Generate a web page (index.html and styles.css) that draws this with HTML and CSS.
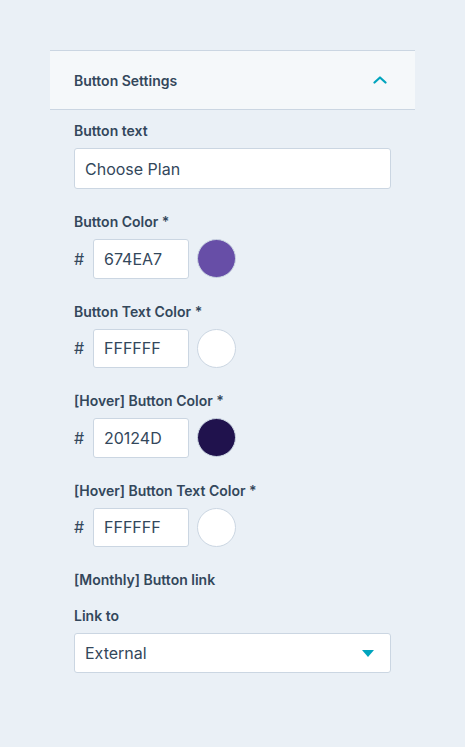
FILE: index.html
```html
<!DOCTYPE html>
<html>
<head>
<meta charset="utf-8">
<link rel="stylesheet" href="styles.css">
</head>
<body>
<div class="panel">
  <div class="panel-header">
    <span class="panel-title">Button Settings</span>
    <svg class="chevron" width="14" height="8" viewBox="0 0 14 8"><path d="M1.5 6.5 L7 1.5 L12.5 6.5" fill="none" stroke="#00a4bd" stroke-width="2.2" stroke-linecap="round" stroke-linejoin="round"/></svg>
  </div>
  <div class="panel-body">
    <div class="field">
      <div class="label">Button text</div>
      <div class="input wide">Choose Plan</div>
    </div>
    <div class="field">
      <div class="label">Button Color *</div>
      <div class="color-row">
        <span class="hash">#</span>
        <div class="input hex">674EA7</div>
        <span class="swatch" style="background:#674ea7"></span>
      </div>
    </div>
    <div class="field">
      <div class="label">Button Text Color *</div>
      <div class="color-row">
        <span class="hash">#</span>
        <div class="input hex">FFFFFF</div>
        <span class="swatch" style="background:#ffffff"></span>
      </div>
    </div>
    <div class="field">
      <div class="label">[Hover] Button Color *</div>
      <div class="color-row">
        <span class="hash">#</span>
        <div class="input hex">20124D</div>
        <span class="swatch" style="background:#20124d"></span>
      </div>
    </div>
    <div class="field">
      <div class="label">[Hover] Button Text Color *</div>
      <div class="color-row">
        <span class="hash">#</span>
        <div class="input hex">FFFFFF</div>
        <span class="swatch" style="background:#ffffff"></span>
      </div>
    </div>
    <div class="field link-heading">
      <div class="label">[Monthly] Button link</div>
    </div>
    <div class="field">
      <div class="label">Link to</div>
      <div class="input wide select">
        <span>External</span>
        <svg class="caret" width="12" height="7" viewBox="0 0 12 7"><path d="M0 0 H12 L6 7 Z" fill="#00a4bd"/></svg>
      </div>
    </div>
  </div>
</div>
</body>
</html>
```

FILE: styles.css
```css
html, body {
  margin: 0;
  padding: 0;
  background: #eaf0f6;
}
body {
  font-family: Inter, "Open Sans", sans-serif;
  color: #33475b;
  padding-top: 50px;
  padding-left: 50px;
  width: 365px;
}
.panel-header {
  height: 60px;
  box-sizing: border-box;
  border-top: 1px solid #cbd6e2;
  border-bottom: 1px solid #cbd6e2;
  background: #f5f8fa;
  display: flex;
  align-items: center;
  justify-content: space-between;
  padding: 0 28px 0 24px;
}
.panel-title {
  font-size: 14px;
  font-weight: 600;
}
.chevron {
  display: block;
}
.panel-body {
  padding: 12px 24px 0 24px;
  display: flex;
  flex-direction: column;
  gap: 24px;
}
.label {
  font-size: 14px;
  font-weight: 600;
  line-height: 18px;
  margin-bottom: 8px;
}
.link-heading .label {
  margin-bottom: 0;
}
.link-heading {
  margin-bottom: -6px;
}
.input {
  box-sizing: border-box;
  height: 41px;
  background: #fff;
  border: 1px solid #cbd6e2;
  border-radius: 3px;
  font-size: 16px;
  display: flex;
  align-items: center;
  padding: 0 10px;
}
.wide {
  width: 317px;
}
.select {
  justify-content: space-between;
  height: 40px;
  padding-right: 16px;
}
.caret {
  display: block;
}
.color-row {
  display: flex;
  align-items: center;
}
.hash {
  font-size: 16px;
  width: 19px;
}
.hex {
  width: 96px;
  height: 39.5px;
}
.swatch {
  width: 39px;
  height: 39px;
  border-radius: 50%;
  box-sizing: border-box;
  border: 1px solid #cbd6e2;
  margin-left: 8px;
}
```
